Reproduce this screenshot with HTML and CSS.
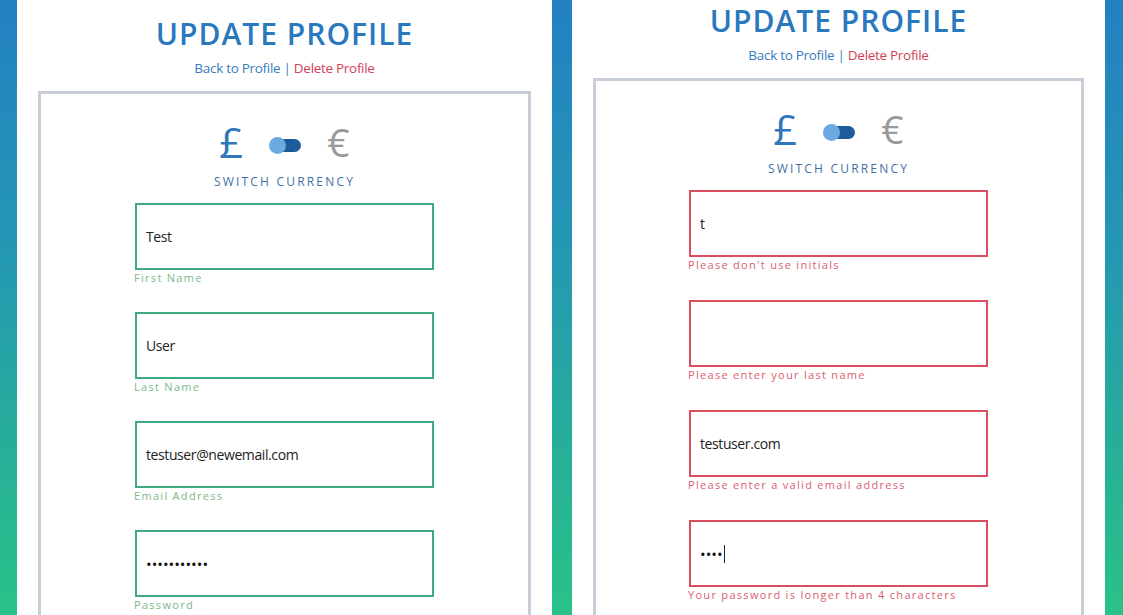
FILE: index.html
```html
<!DOCTYPE html>
<html lang="en">
<head>
<meta charset="utf-8">
<title>Update Profile</title>
<link rel="stylesheet" href="styles.css">
</head>
<body>
<div class="page">
  <section class="panel panel--left">
    <div class="panel-inner">
      <h1 class="panel-title">UPDATE PROFILE</h1>
      <p class="panel-links"><a class="link-back" href="#">Back to Profile</a> <span class="sep">|</span> <a class="link-delete" href="#">Delete Profile</a></p>
      <div class="card">
        <div class="currency">
          <span class="cur cur-gbp">£</span>
          <span class="toggle"><span class="toggle-track"></span><span class="toggle-knob"></span></span>
          <span class="cur cur-eur">€</span>
        </div>
        <div class="currency-label">SWITCH CURRENCY</div>
        <div class="field field--ok">
          <div class="field-box">Test</div>
          <div class="field-hint">First Name</div>
        </div>
        <div class="field field--ok">
          <div class="field-box">User</div>
          <div class="field-hint">Last Name</div>
        </div>
        <div class="field field--ok">
          <div class="field-box">testuser@newemail.com</div>
          <div class="field-hint">Email Address</div>
        </div>
        <div class="field field--ok">
          <div class="field-box field-box--dots">•••••••••••</div>
          <div class="field-hint">Password</div>
        </div>
      </div>
    </div>
  </section>
  <section class="panel panel--right">
    <div class="panel-inner">
      <h1 class="panel-title">UPDATE PROFILE</h1>
      <p class="panel-links"><a class="link-back" href="#">Back to Profile</a> <span class="sep">|</span> <a class="link-delete" href="#">Delete Profile</a></p>
      <div class="card">
        <div class="currency">
          <span class="cur cur-gbp">£</span>
          <span class="toggle"><span class="toggle-track"></span><span class="toggle-knob"></span></span>
          <span class="cur cur-eur">€</span>
        </div>
        <div class="currency-label">SWITCH CURRENCY</div>
        <div class="field field--error">
          <div class="field-box">t</div>
          <div class="field-hint">Please don't use initials</div>
        </div>
        <div class="field field--error">
          <div class="field-box"></div>
          <div class="field-hint">Please enter your last name</div>
        </div>
        <div class="field field--error">
          <div class="field-box">testuser.com</div>
          <div class="field-hint">Please enter a valid email address</div>
        </div>
        <div class="field field--error">
          <div class="field-box field-box--dots">••••<span class="caret"></span></div>
          <div class="field-hint">Your password is longer than 4 characters</div>
        </div>
      </div>
    </div>
  </section>
</div>
</body>
</html>
```
FILE: styles.css
```css
html, body {
  margin: 0;
  padding: 0;
  background: #ffffff;
}

.page {
  height: 615px;
  overflow: hidden;
  display: flex;
  gap: 20px;
  padding: 0 18px 0 17px;
  background: linear-gradient(180deg, #2380c2 0%, #2497b4 40%, #27b097 75%, #29c288 100%);
  font-family: "Open Sans", "Noto Sans", sans-serif;
}

.panel {
  flex: none;
  background: #ffffff;
  height: 100%;
  overflow: hidden;
}

.panel--left { width: 535px; }
.panel--right { width: 533px; }

.panel-inner {
  padding-top: 12px;
}

.panel--right .panel-inner {
  margin-top: -13px;
}

.panel-title {
  margin: 0;
  text-align: center;
  font-size: 30px;
  line-height: 44px;
  font-weight: 600;
  letter-spacing: 1px;
  color: #2a78bd;
}

.panel-links {
  margin: 2px 0 0;
  text-align: center;
  font-size: 13.5px;
  line-height: 20px;
  font-weight: 400;
  letter-spacing: -0.3px;
  color: #4a7fb8;
}

.panel-links a { text-decoration: none; }
.link-back { color: #3a7bbd; }
.link-delete { color: #d1405a; }
.sep { color: #3a7bbd; }

.card {
  margin: 13px 21px 0;
  border: 3px solid #c7ced8;
  border-bottom: none;
  height: 700px;
  padding-top: 28px;
}

.currency {
  display: flex;
  justify-content: center;
  align-items: center;
  gap: 26px;
  height: 40px;
}

.cur {
  font-size: 42px;
  line-height: 40px;
  font-weight: 400;
}

.cur-gbp { color: #2f76bb; }
.cur-eur { color: #9a9a9a; font-size: 39px; }

.toggle {
  position: relative;
  width: 32px;
  height: 17px;
  margin-top: 6px;
}

.toggle-track {
  position: absolute;
  left: 8px;
  right: 0;
  top: 2px;
  height: 13px;
  border-radius: 7px;
  background: #1d5b9c;
}

.toggle-knob {
  position: absolute;
  left: 0;
  top: 0;
  width: 17px;
  height: 17px;
  border-radius: 50%;
  background: #6aaae0;
}

.currency-label {
  margin-top: 12px;
  text-align: center;
  font-size: 12px;
  line-height: 16px;
  letter-spacing: 2.2px;
  color: #3f6fa6;
}

.field {
  width: 299px;
  margin: 0 auto 27px;
}

.panel--right .field { margin-bottom: 28px; }

.currency-label + .field { margin-top: 13px; }

.field-box {
  box-sizing: border-box;
  height: 67px;
  border: 2px solid;
  display: flex;
  align-items: center;
  padding-left: 9px;
  font-size: 14px;
  letter-spacing: -0.4px;
  color: #222222;
}

.field-box--dots {
  font-size: 15px;
  letter-spacing: 0;
  color: #111111;
}

.caret {
  display: inline-block;
  width: 1px;
  height: 18px;
  margin-left: 1px;
  background: #222222;
}

.field-hint {
  margin: 1px 0 0 -1px;
  font-size: 11px;
  line-height: 14px;
  letter-spacing: 1.3px;
  white-space: nowrap;
}

.field--ok .field-box { border-color: #3dab7e; }
.field--ok .field-hint { color: #7db78c; }

.field--error .field-box { border-color: #d84e5e; }
.field--error .field-hint { color: #d9606f; }
```
